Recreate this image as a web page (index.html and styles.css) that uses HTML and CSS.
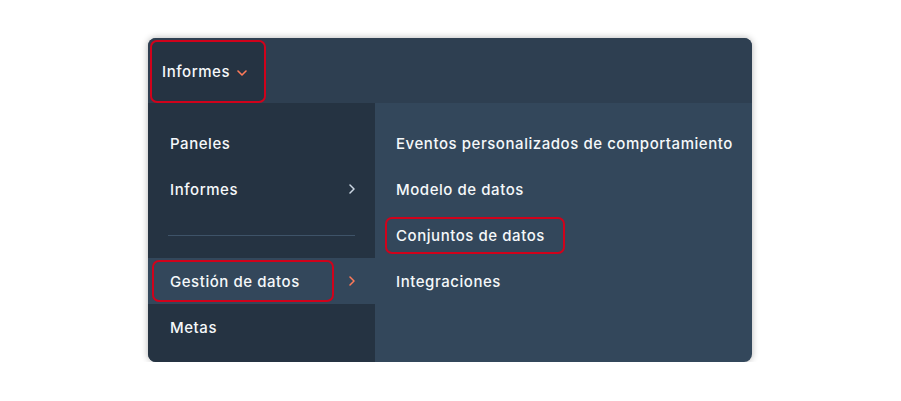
FILE: index.html
```html
<!DOCTYPE html>
<html lang="es">

<head>
  <meta charset="UTF-8">
  <title>Informes</title>
  <link rel="stylesheet" href="styles.css">
</head>

<body>

  <div class="menu">
    <div class="topbar">
      <div class="tab marked">
        Informes
        <svg class="caret" width="10" height="6" viewBox="0 0 10 6"><path d="M1 1l4 4 4-4" fill="none" stroke="#ff7a59" stroke-width="1.6" stroke-linecap="round" stroke-linejoin="round"/></svg>
      </div>
    </div>

    <div class="panels">
      <ul class="side">
        <li class="item">Paneles</li>
        <li class="item">Informes
          <svg class="chev" width="6" height="10" viewBox="0 0 6 10"><path d="M1 1l4 4-4 4" fill="none" stroke="#cbd6e2" stroke-width="1.5" stroke-linecap="round" stroke-linejoin="round"/></svg>
        </li>
        <li class="divider"></li>
        <li class="item active">
          <span class="label marked">Gestión de datos</span>
          <svg class="chev" width="6" height="10" viewBox="0 0 6 10"><path d="M1 1l4 4-4 4" fill="none" stroke="#ff7a59" stroke-width="1.5" stroke-linecap="round" stroke-linejoin="round"/></svg>
        </li>
        <li class="item">Metas</li>
      </ul>

      <ul class="sub">
        <li class="item">Eventos personalizados de comportamiento</li>
        <li class="item">Modelo de datos</li>
        <li class="item"><span class="label marked">Conjuntos de datos</span></li>
        <li class="item">Integraciones</li>
      </ul>
    </div>
  </div>

</body>

</html>
```

FILE: styles.css
```css
body {
  margin: 0;
  background-color: #fff;
  font-family: Inter, "Noto Sans", sans-serif;
  color: #f5f8fa;
}

ul {
  list-style: none;
  margin: 0;
  padding: 0;
}

.menu {
  margin: 38px 0 0 148px;
  width: 604px;
  height: 324px;
  border-radius: 8px;
  overflow: hidden;
  background-color: #33475b;
  box-shadow: 0 0 7px rgba(0, 0, 0, 0.3);
  display: flex;
  flex-direction: column;
}

.marked {
  border: 2px solid #d0021b;
  border-radius: 7px;
  box-sizing: border-box;
}

.topbar {
  height: 65px;
  background-color: #2e3f51;
  display: flex;
  align-items: flex-end;
}

.tab {
  margin-left: 2px;
  width: 116px;
  height: 63px;
  background-color: #253342;
  padding-left: 10px;
  display: flex;
  align-items: center;
  gap: 7px;
  font-size: 15px;
  font-weight: 500;
  letter-spacing: 0.55px;
}

.caret {
  margin-top: 2px;
}

.panels {
  flex: 1;
  display: flex;
}

.side {
  width: 227px;
  background-color: #253342;
  padding-top: 17px;
}

.sub {
  flex: 1;
  padding-top: 17px;
}

.item {
  height: 46px;
  display: flex;
  align-items: center;
  font-size: 15px;
  font-weight: 500;
  letter-spacing: 0.55px;
}

.side .item {
  padding: 0 20px 0 22px;
  justify-content: space-between;
}

.side .item.active {
  background-color: #33475b;
  padding-left: 4px;
}

.side .active .label {
  width: 182px;
  height: 42px;
  padding-left: 16px;
  display: flex;
  align-items: center;
}

.divider {
  height: 46px;
  margin: 0 20px;
  display: flex;
  align-items: center;
}

.divider::after {
  content: "";
  flex: 1;
  height: 1px;
  background-color: #3e5368;
}

.sub .item {
  padding-left: 21px;
}

.sub .label {
  width: 180px;
  height: 37px;
  margin-left: -11px;
  padding-left: 9px;
  display: flex;
  align-items: center;
}
```
